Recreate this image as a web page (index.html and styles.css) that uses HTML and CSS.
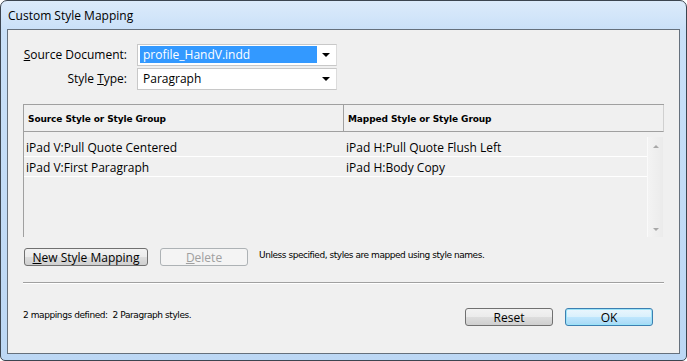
FILE: index.html
```html
<!DOCTYPE html>
<html>
<head>
<meta charset="utf-8">
<link rel="stylesheet" href="styles.css">
</head>
<body>
<div class="window">
  <div class="titlebar">Custom Style Mapping</div>
  <div class="client">
    <div class="fields">
      <div class="field">
        <span class="label"><u>S</u>ource Document:</span>
        <div class="select"><span class="value selected">profile_HandV.indd</span><span class="arrow"></span></div>
      </div>
      <div class="field">
        <span class="label">Style <u>T</u>ype:</span>
        <div class="select"><span class="value">Paragraph</span><span class="arrow"></span></div>
      </div>
    </div>
    <div class="table">
      <div class="thead">
        <div class="th th1">Source Style or Style Group</div>
        <div class="th th2">Mapped Style or Style Group</div>
      </div>
      <div class="tbody">
        <div class="rows">
          <div class="row"><span class="c1">iPad V:Pull Quote Centered</span><span class="c2">iPad H:Pull Quote Flush Left</span></div>
          <div class="row"><span class="c1">iPad V:First Paragraph</span><span class="c2">iPad H:Body Copy</span></div>
        </div>
        <div class="scrollbar">
          <span class="sarrow up"></span>
          <span class="sarrow down"></span>
        </div>
      </div>
    </div>
    <div class="actions">
      <button class="btn newbtn"><u>N</u>ew Style Mapping</button>
      <button class="btn delbtn" disabled><u>D</u>elete</button>
      <span class="note">Unless specified, styles are mapped using style names.</span>
    </div>
    <div class="sep"></div>
    <div class="footer">
      <span class="status">2 mappings defined:&nbsp; 2 Paragraph styles.</span>
      <button class="btn reset">Reset</button>
      <button class="btn ok">OK</button>
    </div>
  </div>
</div>
</body>
</html>
```

FILE: styles.css
```css
html, body {
  margin: 0;
  padding: 0;
  background: #ffffff;
}
body {
  width: 687px;
  height: 361px;
  overflow: hidden;
  font-family: "Open Sans", "Noto Sans", sans-serif;
}
.window {
  box-sizing: border-box;
  width: 687px;
  height: 361px;
  border: 1px solid #3c4550;
  border-radius: 7px 7px 5px 5px;
  background: linear-gradient(180deg, #dcebfb 0px, #c9e0f8 30px, #bcd7f4 361px);
  display: flex;
  flex-direction: column;
  padding: 0 6px 6px 6px;
}
.titlebar {
  height: 28px;
  display: flex;
  align-items: center;
  padding-left: 1px;
  font-size: 12px;
  color: #000;
}
.client {
  flex: 1;
  background: #f0f0f0;
  border: 1px solid #65707c;
  display: flex;
  flex-direction: column;
  padding: 0 15px 0 15px;
}
.fields {
  display: flex;
  flex-direction: column;
  gap: 3px;
  padding-top: 14px;
}
.field {
  display: flex;
  align-items: center;
  height: 21px;
}
.label {
  width: 104px;
  text-align: right;
  font-size: 12px;
  margin-right: 10px;
}
.select {
  box-sizing: border-box;
  width: 200px;
  height: 22px;
  background: #fff;
  border: 1px solid #c8c8c8;
  border-right-color: #dcdcdc;
  display: flex;
  align-items: center;
  padding: 0 2px;
}
.value {
  font-size: 12px;
  padding-left: 3px;
  height: 17px;
  line-height: 17px;
  width: 177px;
  box-sizing: border-box;
}
.value.selected {
  background: #3399ff;
  color: #fff;
}
.arrow {
  margin-left: auto;
  margin-right: 4px;
  width: 0;
  height: 0;
  border-left: 4px solid transparent;
  border-right: 4px solid transparent;
  border-top: 4px solid #000;
}
.table {
  margin-top: 15px;
  height: 133px;
  box-sizing: border-box;
  border-left: 1px solid #a0a0a0;
  border-top: 1px solid #a0a0a0;
  display: flex;
  flex-direction: column;
  font-family: "DejaVu Sans", sans-serif;
}
.thead {
  display: flex;
  height: 26px;
  border-bottom: 1px solid #a0a0a0;
  border-right: 1px solid #d0d0d0;
}
.th {
  font-size: 9px;
  font-weight: bold;
  display: flex;
  align-items: center;
  padding-left: 4px;
  padding-top: 1px;
  letter-spacing: -0.1px;
}
.th1 {
  width: 315px;
  border-right: 1px solid #a0a0a0;
}
.th2 {
  flex: 1;
}
.tbody {
  flex: 1;
  display: flex;
  padding-top: 5px;
}
.rows {
  flex: 1;
  display: flex;
  flex-direction: column;
}
.row {
  display: flex;
  height: 20px;
  border-bottom: 1px solid #ffffff;
  align-items: center;
  font-family: "Open Sans", "Noto Sans", sans-serif;
  font-size: 12px;
  padding-top: 1px;
  box-sizing: border-box;
}
.c1 {
  width: 320px;
  padding-left: 2px;
}
.c2 {
  flex: 1;
}
.scrollbar {
  width: 15px;
  margin-right: 1px;
  background: linear-gradient(90deg, #f3f3f3, #ebebeb);
  border-left: 1px solid #fafafa;
  display: flex;
  flex-direction: column;
  justify-content: space-between;
  align-items: center;
  padding: 8px 0 6px 0;
}
.sarrow {
  width: 0;
  height: 0;
  border-left: 3px solid transparent;
  border-right: 3px solid transparent;
}
.sarrow.up {
  border-bottom: 3px solid #a8a8a8;
}
.sarrow.down {
  border-top: 3px solid #a8a8a8;
}
.actions {
  display: flex;
  align-items: center;
  margin-top: 11px;
  height: 18px;
}
.btn {
  box-sizing: border-box;
  height: 18px;
  border: 1px solid #707070;
  border-radius: 3px;
  background: linear-gradient(180deg, #f2f2f2 0%, #ebebeb 50%, #dddddd 51%, #cfcfcf 100%);
  font-family: "Open Sans", "Noto Sans", sans-serif;
  font-size: 12px;
  color: #000;
  padding: 0;
  line-height: 15px;
}
.newbtn {
  width: 124px;
  margin-left: 1px;
}
.delbtn {
  width: 88px;
  margin-left: 12px;
  background: #f4f4f4;
  border-color: #adb2b5;
  color: #a0a0a0;
}
.note {
  font-family: "DejaVu Sans", sans-serif;
  font-size: 9px;
  margin-left: 11px;
  margin-top: -5px;
  letter-spacing: -0.45px;
}
.sep {
  margin-top: 16px;
  height: 1px;
  background: #a0a0a0;
  border-bottom: 1px solid #ffffff;
}
.footer {
  display: flex;
  align-items: center;
  margin-top: 24px;
  height: 18px;
}
.status {
  font-family: "DejaVu Sans", sans-serif;
  font-size: 9px;
  letter-spacing: -0.42px;
  margin-top: -4px;
}
.reset {
  margin-left: auto;
  width: 88px;
}
.ok {
  width: 88px;
  margin-left: 12px;
  margin-right: 11px;
  border-color: #3c7fb1;
  box-shadow: inset 0 0 0 1px #9be3f8;
  background: linear-gradient(180deg, #eaf6fd 0%, #d9f0fc 50%, #bee6fd 51%, #a7d9f5 100%);
}
```
